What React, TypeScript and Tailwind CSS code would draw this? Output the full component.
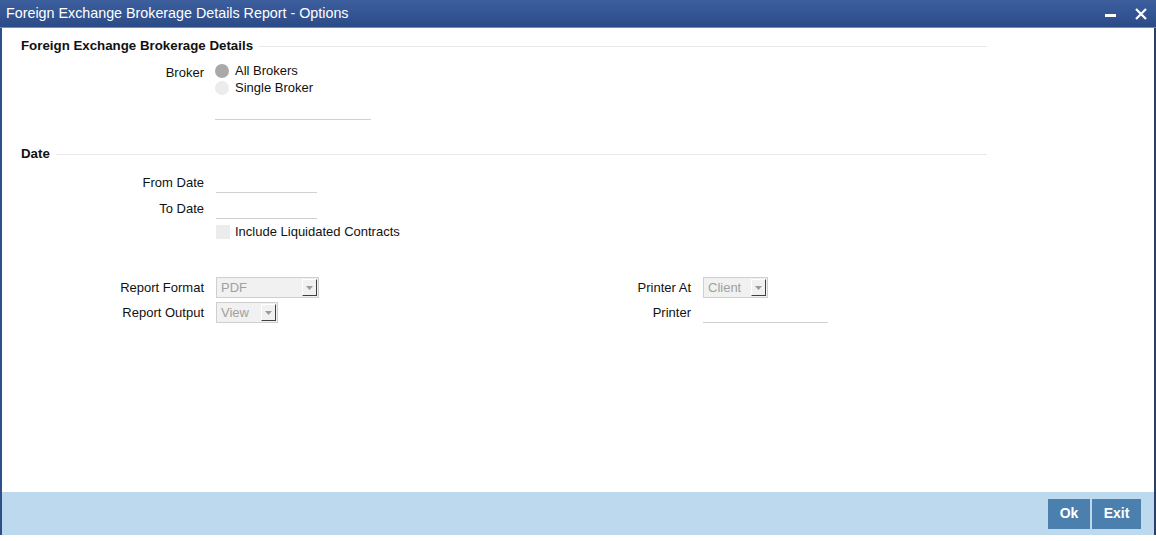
import React from "react";

const font = { fontFamily: '"Liberation Sans", Arial, sans-serif' };

function Select({ value, width }: { value: string; width: string }) {
  return (
    <div className={`flex h-[21px] items-center justify-between border border-[#cfcfcf] bg-[#f1f1f1] pl-[4px] pr-[1px] ${width}`}>
      <span className="text-[13px] leading-none text-[#a0a0a0]">{value}</span>
      <div className="flex h-[17px] w-[15px] items-center justify-center border-t border-l border-t-white border-l-white border-r border-b border-r-[#404040] border-b-[#404040] bg-[#f1f1f1]">
        <svg width="7" height="4" viewBox="0 0 7 4">
          <path d="M0 0 L7 0 L3.5 4 Z" fill="#9a9a9a" />
        </svg>
      </div>
    </div>
  );
}

function SectionHeader({ title }: { title: string }) {
  return (
    <div className="flex w-[985px] items-center pl-[19px]">
      <span className="text-[13.3px] font-bold leading-[16px] text-[#111]">{title}</span>
      <div className="ml-[6px] h-px flex-1 bg-[#e8e8e8]" />
    </div>
  );
}

function Label({ children, w = "w-[202px]" }: { children: React.ReactNode; w?: string }) {
  return <div className={`${w} shrink-0 text-right text-[13px] leading-[16px] text-[#111]`}>{children}</div>;
}

export default function App() {
  return (
    <div className="flex h-[541px] w-[1156px] flex-col bg-white" style={font}>
      <div className="flex h-[28px] shrink-0 items-center justify-between bg-gradient-to-b from-[#3d5f9e] to-[#2b4b87] pl-[6px] pr-[9px] border-b border-[#6d8cbf]">
        <span className="text-[14.3px] leading-none text-white">Foreign Exchange Brokerage Details Report - Options</span>
        <div className="flex items-center gap-[19px]">
          <svg width="11" height="12" viewBox="0 0 11 12">
            <rect x="0" y="6" width="11" height="3" fill="white" />
          </svg>
          <svg width="12" height="12" viewBox="0 0 12 12">
            <path d="M1 1 L11 11 M11 1 L1 11" stroke="white" strokeWidth="2.2" />
          </svg>
        </div>
      </div>

      <div className="flex flex-1 flex-col border-l-2 border-r-2 border-l-[#2f4f8a] border-r-[#2a3f66]">
        <div className="flex flex-1 flex-col">
          <div className="mt-[10px]">
            <SectionHeader title="Foreign Exchange Brokerage Details" />
          </div>

          <div className="mt-[8px] flex">
            <Label>
              <span className="relative top-[3px]">Broker</span>
            </Label>
            <div className="ml-[11px] flex flex-col">
              <div className="flex h-[17px] items-center">
                <div className="h-[14px] w-[14px] rounded-full bg-[#a9a9a9]" />
                <span className="ml-[6px] text-[13px] leading-none text-[#111]">All Brokers</span>
              </div>
              <div className="flex h-[17px] items-center">
                <div className="h-[14px] w-[14px] rounded-full bg-[#ececec]" />
                <span className="ml-[6px] text-[13px] leading-none text-[#111]">Single Broker</span>
              </div>
              <div className="mt-[4px] h-[20px] w-[156px] border-b border-[#d0d0d0]" />
            </div>
          </div>

          <div className="mt-[26px]">
            <SectionHeader title="Date" />
          </div>

          <div className="mt-[11px] flex items-center">
            <Label>From Date</Label>
            <div className="ml-[12px] h-[20px] w-[101px] border-b border-[#d0d0d0]" />
          </div>
          <div className="mt-[6px] flex items-center">
            <Label>To Date</Label>
            <div className="ml-[12px] h-[20px] w-[101px] border-b border-[#d0d0d0]" />
          </div>
          <div className="mt-[5px] flex items-center">
            <div className="w-[202px] shrink-0" />
            <div className="ml-[12px] h-[14px] w-[14px] bg-[#ececec]" />
            <span className="ml-[5px] text-[13px] leading-[16px] text-[#111]">Include Liquidated Contracts</span>
          </div>

          <div className="mt-[37px] flex">
            <div className="flex w-[600px] flex-col gap-[4px]">
              <div className="flex items-center">
                <Label>Report Format</Label>
                <div className="ml-[12px]">
                  <Select value="PDF" width="w-[103px]" />
                </div>
              </div>
              <div className="flex items-center">
                <Label>Report Output</Label>
                <div className="ml-[12px]">
                  <Select value="View" width="w-[62px]" />
                </div>
              </div>
            </div>
            <div className="flex flex-col gap-[4px]">
              <div className="flex items-center">
                <Label w="w-[89px]">Printer At</Label>
                <div className="ml-[12px]">
                  <Select value="Client" width="w-[65px]" />
                </div>
              </div>
              <div className="flex items-center">
                <Label w="w-[89px]">Printer</Label>
                <div className="ml-[12px] h-[21px] w-[125px] border-b border-[#d0d0d0]" />
              </div>
            </div>
          </div>
        </div>

        <div className="flex h-[43px] shrink-0 items-center justify-end gap-[2px] bg-[#bdd9ed] pr-[13px]">
          <button className="flex h-[30px] w-[42px] items-center justify-center bg-[#4a7fae] text-[14px] font-bold text-white">
            Ok
          </button>
          <button className="flex h-[30px] w-[49px] items-center justify-center bg-[#4a7fae] text-[14px] font-bold text-white">
            Exit
          </button>
        </div>
      </div>
      <div className="h-[6px] shrink-0 bg-white" />
    </div>
  );
}
